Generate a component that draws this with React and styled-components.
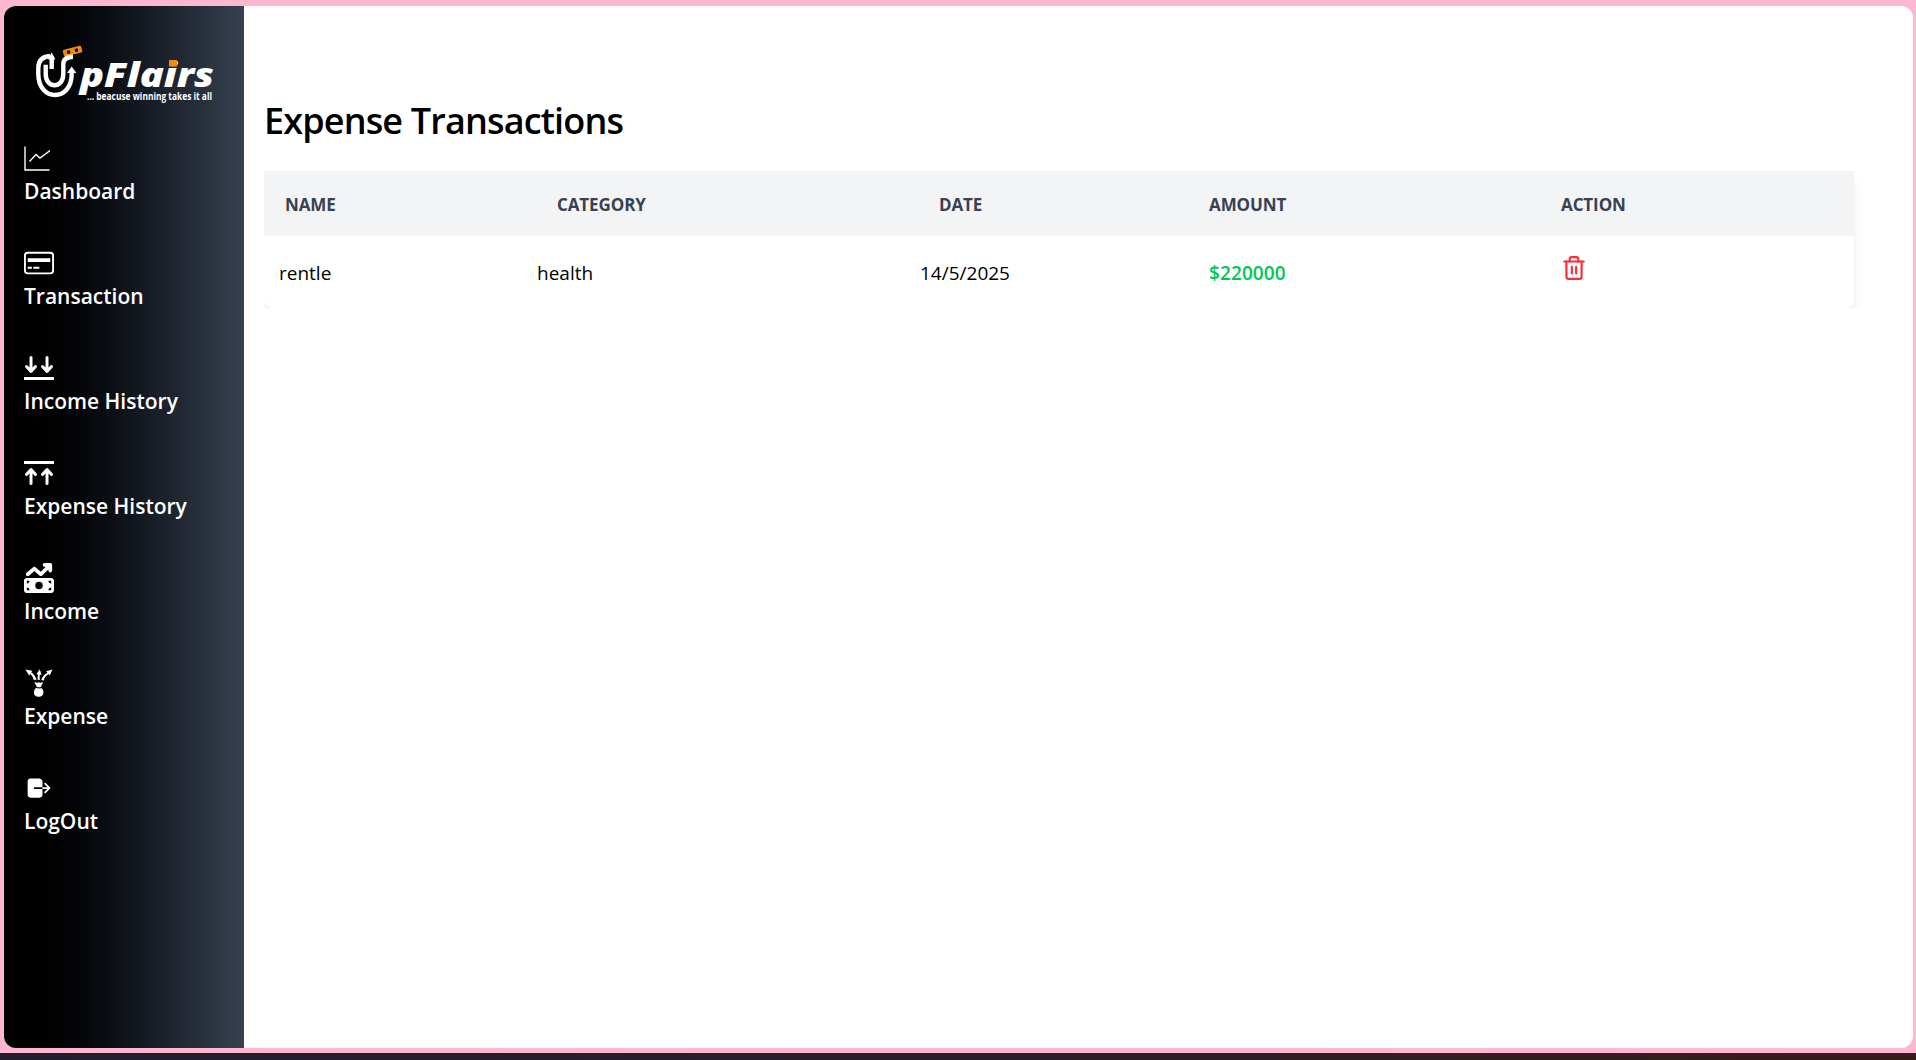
import React from "react";
import styled, { createGlobalStyle } from "styled-components";
import { FaMoneyBillTrendUp } from "react-icons/fa6";
import { GiExpense } from "react-icons/gi";
import { IoLogOut } from "react-icons/io5";
import { Trash2 } from "lucide-react";

const GlobalStyle = createGlobalStyle`
	html, body {
		margin: 0;
		padding: 0;
		background: #ffb6cf;
	}
	* {
		box-sizing: border-box;
	}
`;

const Page = styled.div`
	width: 100%;
	height: 100vh;
	display: flex;
	flex-direction: column;
	overflow: hidden;
	font-family: "Open Sans", "Noto Sans", "Liberation Sans", sans-serif;
	background: #ffb6cf;
	padding-top: 6px;
`;

const Frame = styled.div`
	height: 1042px;
	margin: 0 3px 0 4px;
	display: flex;
	border-radius: 12px;
	overflow: hidden;
	background: #fff;
`;

const Taskbar = styled.div`
	margin-top: 5px;
	flex: 1;
	background: linear-gradient(to right, #221d2e, #2b1e2a 50%, #381c1c);
`;

const Sidebar = styled.aside`
	width: 240px;
	flex: none;
	padding: 38px 0 0 20px;
	background: linear-gradient(to right in oklab, #000, #374151);
	color: #fff;
`;

const Logo = styled.svg`
	display: block;
	margin-left: 9px;
`;

const Nav = styled.nav`
	margin-top: 39px;
	display: flex;
	flex-direction: column;
	gap: 42px;
`;

const NavItem = styled.a`
	display: flex;
	flex-direction: column;
	height: 63px;
	color: #fff;
	text-decoration: none;
	cursor: pointer;
`;

const IconBox = styled.span`
	height: 30px;
	width: 30px;
	display: flex;
	align-items: center;
	justify-content: ${props => props.$start ? "flex-start" : "center"};
`;

const NavLabel = styled.span`
	margin-top: 3px;
	font-size: 21px;
	font-weight: 600;
	line-height: 30px;
	letter-spacing: 0;
	white-space: nowrap;
`;

const Main = styled.main`
	flex: 1;
	padding: 90px 0 0 20px;
`;

const Title = styled.h1`
	margin: 0 0 25px;
	height: 50px;
	font-size: 36px;
	line-height: 50px;
	font-weight: 600;
	letter-spacing: -0.85px;
	color: #000;
`;

// clips the card's shadow to the top, left and bottom, as the scrolling wrapper does
const TableClip = styled.div`
	width: 1630px;
	overflow: hidden;
`;

const TableCard = styled.div`
	width: 1590px;
	border-radius: 0 0 8px 8px;
	background: #fff;
	box-shadow: 0 10px 15px -3px rgba(0, 0, 0, 0.1), 0 4px 6px -4px rgba(0, 0, 0, 0.1);
	overflow: hidden;
`;

const Table = styled.table`
	width: 100%;
	table-layout: fixed;
	border-collapse: collapse;
`;

const HeadRow = styled.tr`
	height: 65px;
	background: #f3f4f6;
`;

const HeadCell = styled.th`
	padding: 2px 0 0 ${props => props.$pad}px;
	text-align: left;
	font-size: 17px;
	font-weight: 700;
	letter-spacing: -0.1px;
	text-transform: uppercase;
	color: #374151;
`;

const BodyRow = styled.tr`
	height: 72px;
`;

const BodyCell = styled.td`
	padding: 2px 0 0 ${props => props.$pad}px;
	font-size: 19px;
	letter-spacing: 0;
	color: #000;
`;

const Amount = styled(BodyCell)`
	color: #00c853;
	font-weight: 600;
	letter-spacing: 0.1px;
`;

const DeleteButton = styled.button`
	display: block;
	margin: -8px 0 0;
	padding: 0;
	border: 0;
	background: none;
	color: #fb2c36;
	cursor: pointer;
`;

const ChartIcon = () => (
	<svg width="26" height="26" viewBox="0 0 26 26" fill="none" stroke="#fff" strokeWidth="1.4">
		<path d="M1 1.5V25H25.5" />
		<path d="M5.5 16.5L12 9.5L16 13L27 5" />
	</svg>
);

const CardIcon = () => (
	<svg width="30" height="30" viewBox="0 0 16 16" fill="#fff">
		<path d="M14 3a1 1 0 0 1 1 1v8a1 1 0 0 1-1 1H2a1 1 0 0 1-1-1V4a1 1 0 0 1 1-1h12zM2 2a2 2 0 0 0-2 2v8a2 2 0 0 0 2 2h12a2 2 0 0 0 2-2V4a2 2 0 0 0-2-2H2z" />
		<path d="M2 5.5h12v2H2zM2 10h2.2v1H2zM5 10h3.2v1H5z" />
	</svg>
);

const ArrowsIcon = ({ up }) => (
	<svg width="30" height="24" viewBox="0 0 30 24" fill="none" stroke="#fff" strokeWidth="3" strokeLinecap="round" strokeLinejoin="round">
		<g transform={up ? "rotate(180 15 12)" : undefined}>
			<path d="M7 1.5V15M2.5 10.5L7 15.5L11.5 10.5" />
			<path d="M23 1.5V15M18.5 10.5L23 15.5L27.5 10.5" />
			<path d="M0 22.5H30" strokeWidth="3" strokeLinecap="butt" />
		</g>
	</svg>
);

const LogoMark = () => (
	<Logo width="184" height="60" viewBox="0 0 184 60">
		<g transform="rotate(-14 40 7)">
			<rect x="30" y="3.5" width="19" height="7" rx="1.5" fill="#f08a0c" />
			<circle cx="35.5" cy="7" r="1.8" fill="#111" />
			<circle cx="43.5" cy="7" r="1.8" fill="#111" />
		</g>
		<g fill="none" stroke="#fff" strokeWidth="4.4">
			<path d="M17 12Q5.3 13 5.3 24V30C5.3 58 38.7 58 38.7 30V27" />
			<path d="M12.7 20.7V30C12.7 45 30.3 45 30.3 30V20Q30.3 13 40 12.7" />
			<path d="M18.7 12V25" />
		</g>
		<path d="M15 15.5L18.7 8.5L22.4 15.5Z" fill="#fff" />
		<path d="M34 29L38.7 22.5L43.4 29Z" fill="#fff" />
		<text x="47" y="43" textLength="134" lengthAdjust="spacingAndGlyphs" fill="#fff" fontFamily="'Open Sans', sans-serif" fontSize="34" fontWeight="800" fontStyle="italic">pFlairs</text>
		<rect x="136" y="16" width="8" height="6.5" fill="#f08a0c" />
		<text x="54" y="56" textLength="125" lengthAdjust="spacingAndGlyphs" fill="#fff" fontFamily="'Open Sans', sans-serif" fontSize="10" fontWeight="700">... beacuse winning takes it all</text>
	</Logo>
);

const navItems = [
	{ label: "Dashboard", icon: <ChartIcon />, start: true },
	{ label: "Transaction", icon: <CardIcon /> },
	{ label: "Income History", icon: <ArrowsIcon /> },
	{ label: "Expense History", icon: <ArrowsIcon up /> },
	{ label: "Income", icon: <FaMoneyBillTrendUp size={30} /> },
	{ label: "Expense", icon: <GiExpense size={30} /> },
	{ label: "LogOut", icon: <IoLogOut size={28} /> },
];

const columns = [266, 380, 280, 355, 309];

const App = () => {
	return (
		<>
			<GlobalStyle />
			<Page>
				<Frame>
					<Sidebar>
						<LogoMark />
						<Nav>
							{navItems.map(item => (
								<NavItem key={item.label}>
									<IconBox $start={item.start}>{item.icon}</IconBox>
									<NavLabel>{item.label}</NavLabel>
								</NavItem>
							))}
						</Nav>
					</Sidebar>
					<Main>
						<Title>Expense Transactions</Title>
						<TableClip>
							<TableCard>
								<Table>
									<colgroup>
										{columns.map((width, index) => (
											<col key={index} width={width} />
										))}
									</colgroup>
									<thead>
										<HeadRow>
											<HeadCell $pad={21}>Name</HeadCell>
											<HeadCell $pad={27}>Category</HeadCell>
											<HeadCell $pad={29}>Date</HeadCell>
											<HeadCell $pad={19}>Amount</HeadCell>
											<HeadCell $pad={16}>Action</HeadCell>
										</HeadRow>
									</thead>
									<tbody>
										<BodyRow>
											<BodyCell $pad={15}>rentle</BodyCell>
											<BodyCell $pad={7}>health</BodyCell>
											<BodyCell $pad={10}>14/5/2025</BodyCell>
											<Amount $pad={19}>$220000</Amount>
											<BodyCell $pad={16}>
												<DeleteButton aria-label="Delete">
													<Trash2 size={26} strokeWidth={2} />
												</DeleteButton>
											</BodyCell>
										</BodyRow>
									</tbody>
								</Table>
							</TableCard>
						</TableClip>
					</Main>
				</Frame>
				<Taskbar />
			</Page>
		</>
	);
};

export default App;
